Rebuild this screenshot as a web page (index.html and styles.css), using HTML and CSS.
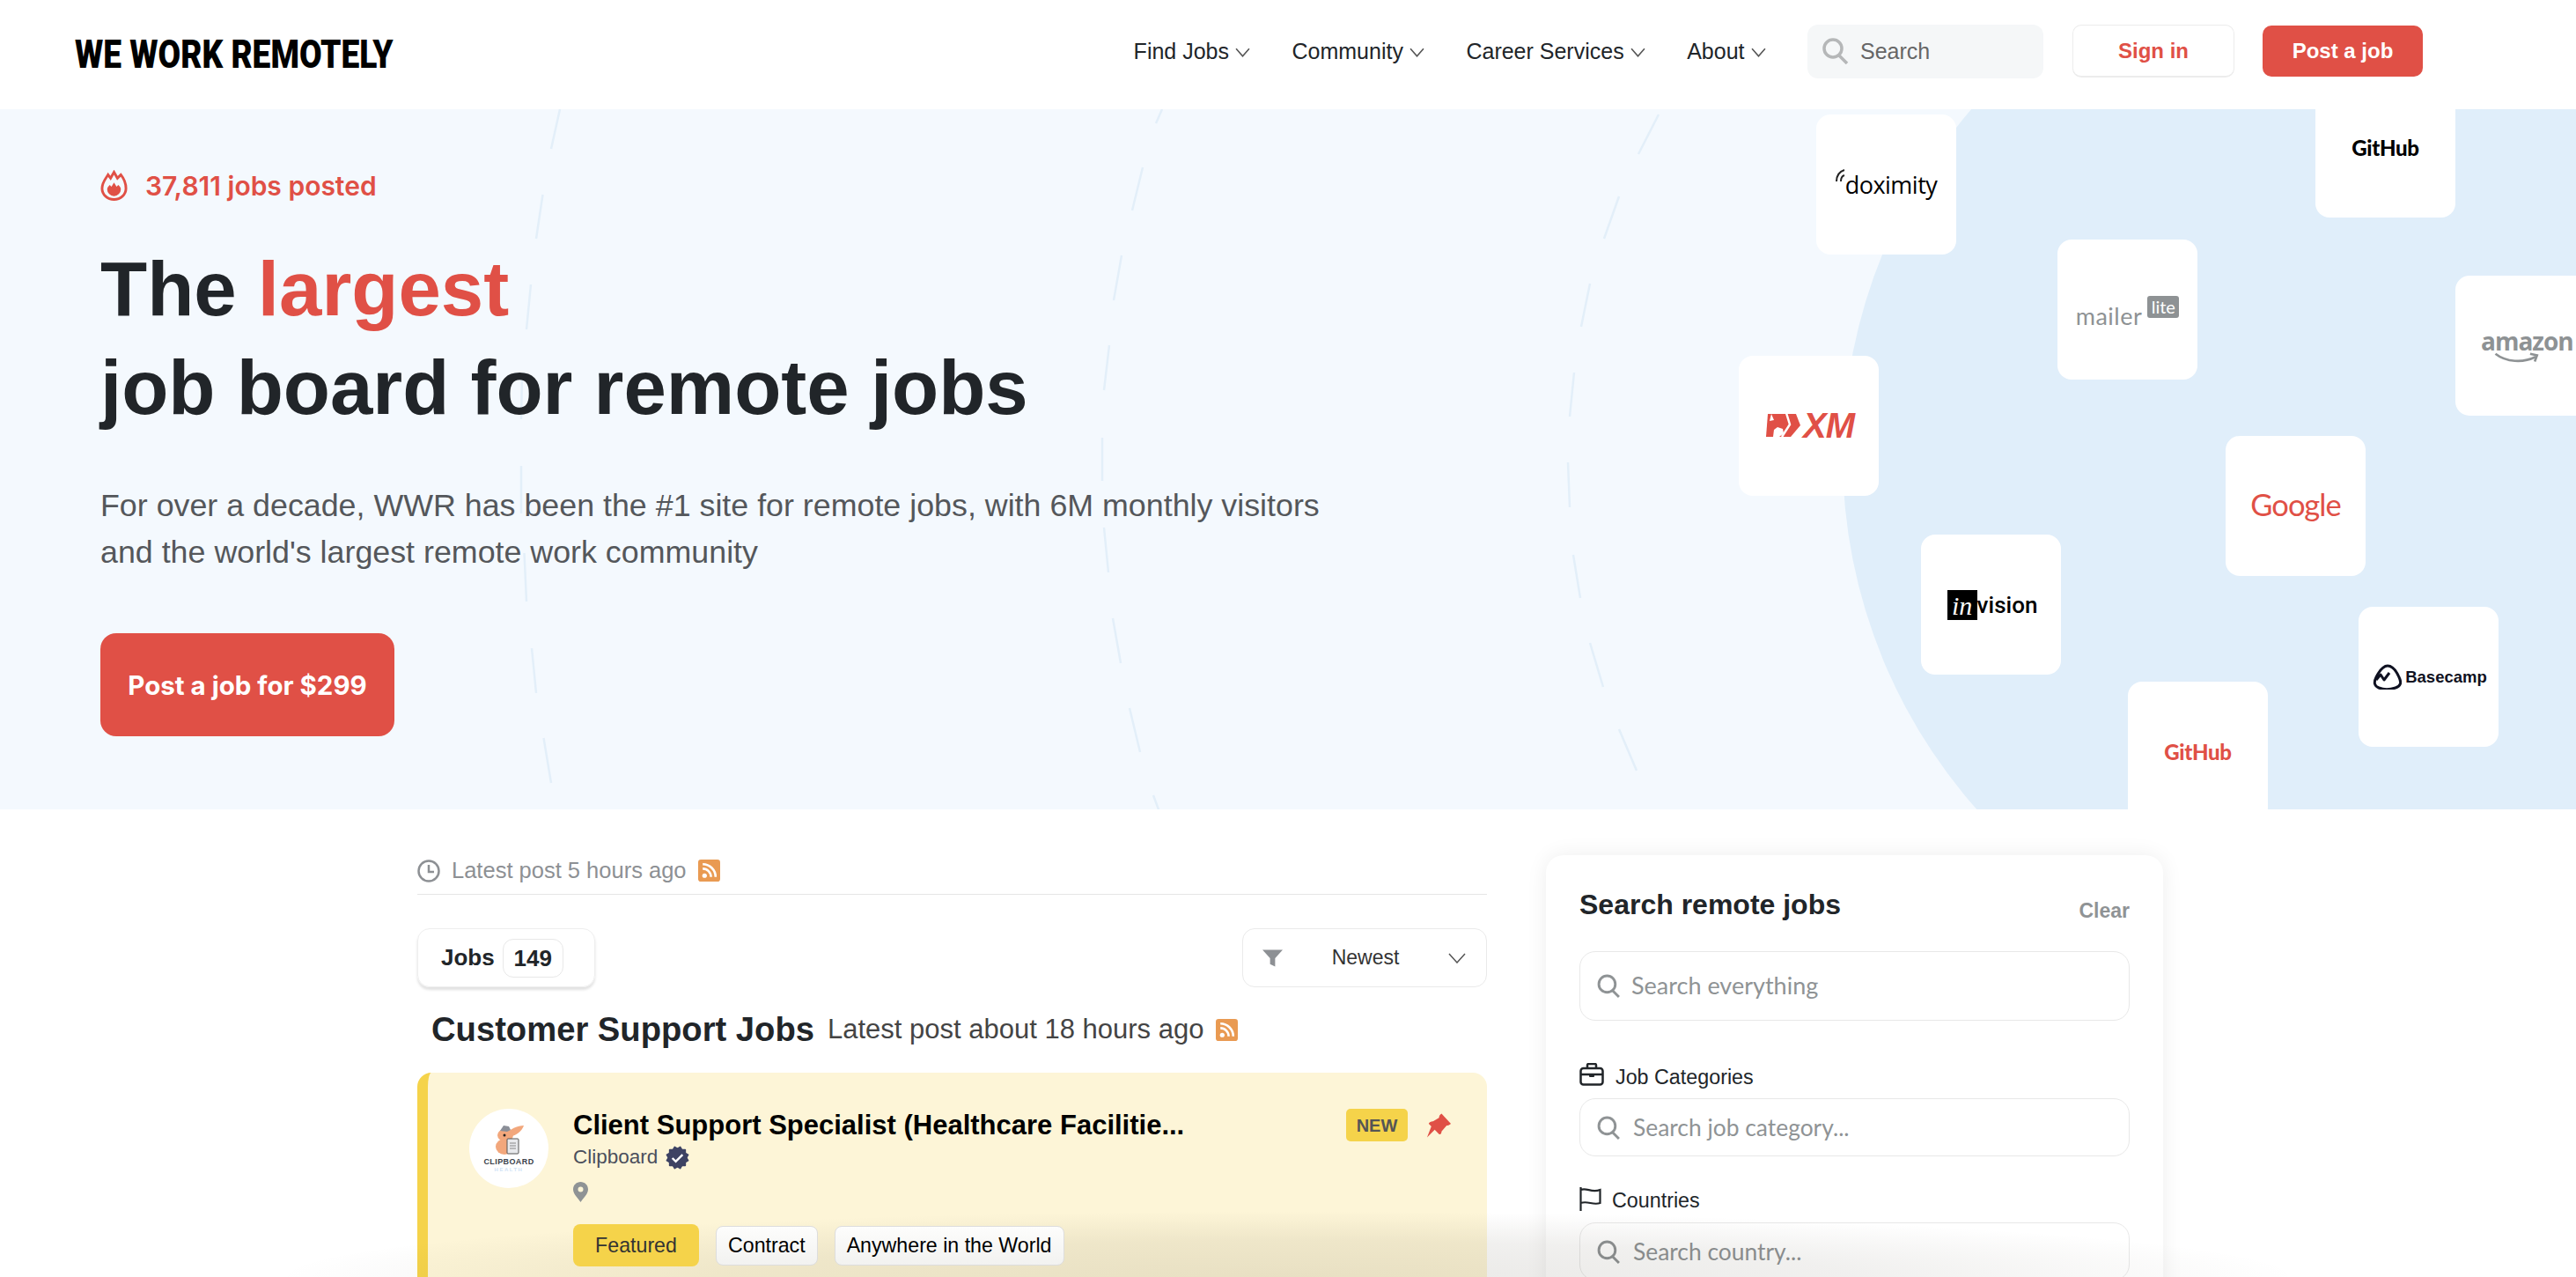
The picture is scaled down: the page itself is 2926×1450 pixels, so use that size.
FILE: index.html
```html
<!DOCTYPE html>
<html lang="en">
<head>
  <meta charset="UTF-8">
  <meta name="viewport" content="width=device-width, initial-scale=1.0">
  <title>We Work Remotely</title>
  <link rel="stylesheet" href="styles.css">
</head>
<body>
<div class="page">
  <!-- Top bar -->
  <header class="topbar">
    <a class="brand"><span class="brand-text">WE WORK REMOTELY</span></a>
    <nav class="nav">
      <a class="nav-link">Find Jobs <svg class="caret" viewBox="0 0 16 10"><path d="M1 1l7 8 7-8"/></svg></a>
      <a class="nav-link">Community <svg class="caret" viewBox="0 0 16 10"><path d="M1 1l7 8 7-8"/></svg></a>
      <a class="nav-link">Career Services <svg class="caret" viewBox="0 0 16 10"><path d="M1 1l7 8 7-8"/></svg></a>
      <a class="nav-link">About <svg class="caret" viewBox="0 0 16 10"><path d="M1 1l7 8 7-8"/></svg></a>
      <div class="nav-search">
        <svg class="nav-search-icon" viewBox="0 0 33 30"><circle cx="13" cy="12" r="10"/><path d="M20 20l9 9"/></svg>
        <span>Search</span>
      </div>
      <a class="btn-outline">Sign in</a>
      <a class="btn-red">Post a job</a>
    </nav>
  </header>

  <!-- Hero -->
  <section class="hero">
    <div class="hero-circle"></div>
    <svg class="hero-dashes" viewBox="0 0 2926 795">
      <path d="M636 0L626 45M616.500 97L609 147M603 199L598 250M593 301L592 352M592 405L592 459M595.500 504L598 559M604 612L609 663M617.500 714L626 765"/>
      <path d="M1320 0L1313 16M1298 66L1286 115M1274 166L1265 217M1260 268L1254 319M1252 373L1252 422M1254 475L1259 526M1264 578L1273 629M1283 680L1295 730M1310 779L1320 806"/>
      <path d="M1884 6L1861 51M1839 99L1822 147M1806 198L1796 247M1788 299L1783 349M1781 401L1783 452M1787 506L1795 555M1806 606L1821 656M1839 704L1859 751M1884 796"/>
    </svg>

    <div class="hero-copy">
      <div class="hero-count">
        <svg class="flame" viewBox="0 0 32 36">
          <path class="flame-line" d="M16 2l4 7 4-4c4 5 6 10 6 16a14 13 0 0 1-28 0c0-7 4-11 7-16l3 4z"/>
          <path class="flame-fill" d="M16 14l3 5 2-2c2 2 3 3 3 5a8 8 0 0 1-16 0c0-2 2-4 3-5l2 2z"/>
        </svg>
        <span>37,811 jobs posted</span>
      </div>
      <h1>The <em>largest</em><br>job board for remote jobs</h1>
      <p class="hero-lead">For over a decade, WWR has been the #1 site for remote jobs, with 6M monthly visitors<br>and the world's largest remote work community</p>
      <a class="hero-btn">Post a job for $299</a>
    </div>

    <!-- company tiles sit on a free canvas -->
    <div class="tile tile-doximity">
      <svg class="dox-waves" viewBox="0 0 14 24"><path d="M12 2C6 4 3 9 3 15M12 8C9 9 8 12 8 15"/></svg>
      <span>doximity</span>
    </div>
    <div class="tile tile-github-top"><span>GitHub</span></div>
    <div class="tile tile-mailer"><span>mailer</span><b>lite</b></div>
    <div class="tile tile-amazon">
      <span>amazon</span>
      <svg viewBox="0 0 60 16"><path d="M2 2c14 11 36 12 52 4"/><path d="M47 2l9 2-3 8"/></svg>
    </div>
    <div class="tile tile-xm">
      <svg viewBox="0 0 41 28">
        <path class="xm-base" d="M3 1h32l5 13-11 13H1z"/>
        <path class="xm-cut" d="M7 1l3 7-5 1zM9 27l1-8 4-3 6 2 1 5-5 4z"/>
        <path class="xm-line" d="M24 0l4 13-9 14"/>
      </svg>
      <span>XM</span>
    </div>
    <div class="tile tile-google"><span>Google</span></div>
    <div class="tile tile-invision"><i>in</i><span>vision</span></div>
    <div class="tile tile-basecamp">
      <svg viewBox="0 0 33 29"><path class="bc-shell" d="M17 2c6 0 10 6 13 13 3 6 2 10-4 12-6 2-14 2-19 0-5-2-6-6-3-12C7 9 11 2 17 2z"/><path class="bc-zig" d="M4 18l5-6 4 6 6-8"/></svg>
      <span>Basecamp</span>
    </div>
    <div class="tile tile-github-low"><span>GitHub</span></div>
  </section>

  <!-- Jobs and filters -->
  <main class="board">
    <div class="jobs-col">
      <div class="latest-row">
        <svg class="clock" viewBox="0 0 26 26"><circle cx="13" cy="13" r="11.500"/><path d="M13 6v8h6"/></svg>
        <span>Latest post 5 hours ago</span>
        <svg class="rss" viewBox="0 0 24 24"><rect width="24" height="24" rx="3"/><circle cx="7" cy="17.500" r="2.500"/><path d="M5 10a9 9 0 0 1 9 9M5 5a14 14 0 0 1 14 14"/></svg>
      </div>

      <div class="toolbar">
        <div class="jobs-tab"><span>Jobs</span><span class="jobs-count">149</span></div>
        <div class="sort-box">
          <svg class="funnel" viewBox="0 0 24 20"><path d="M0 0h24l-9 10v10l-6-3v-7z"/></svg>
          <span>Newest</span>
          <svg class="sort-caret" viewBox="0 0 20 12"><path d="M1 1l9 10 9-10"/></svg>
        </div>
      </div>

      <div class="category-head">
        <h2>Customer Support Jobs</h2>
        <span>Latest post about 18 hours ago</span>
        <svg class="rss" viewBox="0 0 24 24"><rect width="24" height="24" rx="3"/><circle cx="7" cy="17.500" r="2.500"/><path d="M5 10a9 9 0 0 1 9 9M5 5a14 14 0 0 1 14 14"/></svg>
      </div>

      <article class="job-card">
        <div class="job-logo">
          <svg viewBox="0 0 36 36">
            <path fill="#f2a77c" d="M16 10C20 6 28 2 35 2c-2 6-9 12-15 12z"/>
            <ellipse cx="14" cy="13" rx="9" ry="7" fill="#f2a77c"/>
            <ellipse cx="13" cy="26" rx="10" ry="9" fill="#f2a77c"/>
            <path fill="#8b8f98" d="M8 8l4-6 6 1 2 4-4 2z"/>
            <circle cx="13" cy="13" r="1.500" fill="#222"/>
            <rect x="16" y="17" width="13" height="17" rx="1" fill="#e8e9ec" stroke="#555"/>
            <path stroke="#888" d="M19 22h7M19 25h7M19 28h7"/>
          </svg>
          <span class="logo-name">CLIPBOARD</span>
          <span class="logo-sub">HEALTH</span>
        </div>
        <div class="job-body">
          <h3>Client Support Specialist (Healthcare Facilitie...</h3>
          <div class="company">
            <span>Clipboard</span>
            <svg class="verified" viewBox="0 0 30 30">
              <rect x="5" y="5" width="20" height="20" rx="1"/>
              <rect x="5" y="5" width="20" height="20" rx="1" transform="rotate(30 15 15)"/>
              <rect x="5" y="5" width="20" height="20" rx="1" transform="rotate(60 15 15)"/>
              <path d="M9 15.500l4 4 8-8"/>
            </svg>
          </div>
          <svg class="map-pin" viewBox="0 0 17 23"><path fill-rule="evenodd" d="M8.500 0C13 0 17 3.500 17 8.500 17 14 11 19 8.500 23 6 19 0 14 0 8.500 0 3.500 4 0 8.500 0zm0 5.500a3 3 0 1 0 0 6 3 3 0 0 0 0-6z"/></svg>
          <div class="tags">
            <span class="tag tag-featured">Featured</span>
            <span class="tag">Contract</span>
            <span class="tag">Anywhere in the World</span>
          </div>
        </div>
        <div class="job-flags">
          <span class="new-badge">NEW</span>
          <svg class="tack" viewBox="0 0 30 28"><path d="M18 0l11 12c-2 2-4 2-5 2l-6 7c0 2-1 4-3 3l-5-5-9 9 5-13-3-3c0-2 3-3 5-3l7-4c0-2 1-4 3-5z"/></svg>
        </div>
      </article>
    </div>

    <aside class="filters">
      <div class="filters-head">
        <h2>Search remote jobs</h2>
        <a>Clear</a>
      </div>
      <div class="field field-big">
        <svg class="field-icon" viewBox="0 0 26 26"><circle cx="11" cy="11" r="9"/><path d="M17 18l7 7"/></svg>
        <span>Search everything</span>
      </div>
      <div class="filter-label label-cat">
        <svg class="case-icon" viewBox="0 0 28 26"><rect x="1.500" y="6" width="25" height="18.500" rx="3"/><path d="M9 6V2.500A1.500 1.500 0 0 1 10.500 1h7A1.500 1.500 0 0 1 19 2.500V6M1.500 13h25"/><rect class="case-clasp" x="11" y="12" width="6" height="4" rx="1"/></svg>
        <span>Job Categories</span>
      </div>
      <div class="field">
        <svg class="field-icon" viewBox="0 0 26 26"><circle cx="11" cy="11" r="9"/><path d="M17 18l7 7"/></svg>
        <span>Search job category...</span>
      </div>
      <div class="filter-label label-country">
        <svg class="flag-icon" viewBox="0 0 25 27"><path d="M1.500 0v27M1.500 3c7-3 12 4 22 0v15c-8 3-14-3-22 0"/></svg>
        <span>Countries</span>
      </div>
      <div class="field">
        <svg class="field-icon" viewBox="0 0 26 26"><circle cx="11" cy="11" r="9"/><path d="M17 18l7 7"/></svg>
        <span>Search country...</span>
      </div>
    </aside>
  </main>

  <div class="bottom-fade"></div>
</div>
</body>
</html>
```

FILE: styles.css
```css
* {
  box-sizing: border-box;
}

html, body {
  margin: 0;
  padding: 0;
}

body {
  font-family: "Liberation Sans", Arial, sans-serif;
  color: #212529;
  background: #fff;
}

h1, h2, h3, p {
  margin: 0;
}

svg {
  display: block;
  flex: none;
}

.page {
  position: relative;
  height: 100vh;
  overflow: hidden;
}

/* Top bar */
.topbar {
  display: flex;
  align-items: center;
  justify-content: space-between;
  height: 124px;
  padding: 0 174px 8px 85px;
  background: #fff;
}

.brand-text {
  display: block;
  width: 450px;
  margin-top: 6px;
  font-family: Roboto, sans-serif;
  font-size: 45px;
  font-weight: 900;
  color: #000;
  white-space: nowrap;
  transform: scaleX(0.825);
  transform-origin: left center;
}

.nav {
  display: flex;
  align-items: center;
}

.nav-link {
  display: flex;
  align-items: center;
  gap: 7px;
  margin-right: 47.500px;
  font-size: 25px;
  color: #212529;
  white-space: nowrap;
}

.caret {
  width: 17px;
  height: 11px;
  margin-top: 3px;
}

.caret path,
.sort-caret path {
  fill: none;
  stroke: #555;
  stroke-width: 1.500;
}

.nav-search {
  display: flex;
  align-items: center;
  gap: 11px;
  width: 268px;
  height: 61px;
  padding-left: 16px;
  margin-right: 33px;
  font-size: 25px;
  color: #666;
  background: #f5f7f8;
  border-radius: 12px;
}

.nav-search-icon {
  width: 33px;
  height: 30px;
}

.nav-search-icon circle,
.nav-search-icon path {
  fill: none;
  stroke: #b5b7b8;
  stroke-width: 3.500;
}

.btn-outline,
.btn-red {
  display: flex;
  align-items: center;
  justify-content: center;
  height: 60px;
  font-size: 24px;
  font-weight: 700;
  border-radius: 10px;
}

.btn-outline {
  width: 184px;
  margin-right: 32px;
  color: #e05046;
  background: #fff;
  border: 1px solid #ececec;
  border-bottom-width: 2px;
}

.btn-red {
  width: 182px;
  height: 58px;
  color: #fff;
  background: #e05046;
}

/* Hero */
.hero {
  position: relative;
  height: 795px;
  overflow: hidden;
  background: #f4f9fe;
}

.hero-circle {
  position: absolute;
  left: 2093px;
  top: -210px;
  width: 1208px;
  height: 1208px;
  border-radius: 50%;
  background: #e0eefa;
}

.hero-dashes {
  position: absolute;
  left: 0;
  top: 0;
  width: 2926px;
  height: 795px;
}

.hero-dashes path {
  fill: none;
  stroke: #e3eff9;
  stroke-width: 2.500;
}

.hero-copy {
  position: relative;
  padding: 69px 0 0 114px;
}

.hero-count {
  display: flex;
  align-items: center;
  gap: 20px;
  height: 36px;
  font-family: Inter, sans-serif;
  font-size: 30px;
  font-weight: 600;
  color: #e05046;
}

.flame {
  width: 31px;
  height: 36px;
}

.flame-line {
  fill: none;
  stroke: #e05046;
  stroke-width: 3;
}

.flame-fill {
  fill: #e05046;
}

h1 {
  margin-top: 43px;
  font-size: 87px;
  line-height: 112px;
  font-weight: 700;
  color: #212529;
}

h1 em {
  font-style: normal;
  color: #e05046;
}

.hero-lead {
  margin-top: 52px;
  font-size: 35.800px;
  line-height: 53px;
  color: #54575b;
}

.hero-btn {
  display: flex;
  align-items: center;
  justify-content: center;
  width: 334px;
  height: 117px;
  margin-top: 65px;
  font-family: Inter, sans-serif;
  font-size: 29.500px;
  font-weight: 700;
  color: #fff;
  background: #e05046;
  border-radius: 18px;
}

/* Logo tiles */
.tile {
  position: absolute;
  display: flex;
  align-items: center;
  justify-content: center;
  width: 159px;
  height: 159px;
  background: #fff;
  border-radius: 16px;
}

.tile-doximity {
  left: 2063px;
  top: 6px;
  padding-left: 4px;
  font-family: "Open Sans", sans-serif;
  font-size: 27px;
  color: #000;
  letter-spacing: -0.5px;
}

.dox-waves {
  width: 14px;
  height: 24px;
  margin: -14px -1px 0 -6px;
}

.dox-waves path {
  fill: none;
  stroke: #222;
  stroke-width: 2;
}

.tile-github-top,
.tile-github-low {
  font-family: Lato, sans-serif;
  font-size: 24px;
  font-weight: 900;
  letter-spacing: -0.3px;
}

.tile-github-top {
  left: 2630px;
  top: -36px;
  color: #000;
}

.tile-mailer {
  left: 2337px;
  top: 148px;
  gap: 6px;
  font-family: Lato, sans-serif;
  font-size: 27px;
  color: #8e9294;
  letter-spacing: 0.5px;
}

.tile-mailer span {
  margin-top: 13px;
}

.tile-mailer b {
  display: block;
  position: relative;
  width: 36px;
  height: 25px;
  margin-top: -6px;
  font-size: 20px;
  font-weight: 400;
  line-height: 24px;
  text-align: center;
  letter-spacing: 0;
  color: #fff;
  background: #8e9294;
  border-radius: 3px;
}

.tile-amazon {
  left: 2789px;
  top: 189px;
  flex-direction: column;
  align-items: flex-start;
  padding-left: 29px;
  font-family: "Open Sans", sans-serif;
  font-size: 28px;
  font-weight: 700;
  line-height: 30px;
  color: #8e9294;
  letter-spacing: -1px;
}

.tile-amazon svg {
  width: 54px;
  height: 14px;
  margin: -2px 0 0 14px;
}

.tile-amazon svg path {
  fill: none;
  stroke: #8e9294;
  stroke-width: 3;
}

.tile-xm {
  left: 1975px;
  top: 280px;
  gap: 2px;
  padding-left: 2px;
  font-size: 40px;
  font-weight: 700;
  font-style: italic;
  color: #e05046;
  letter-spacing: -1px;
}

.tile-xm svg {
  width: 41px;
  height: 28px;
  margin-top: -2px;
}

.xm-base {
  fill: #e05046;
}

.xm-cut {
  fill: #fff;
}

.xm-line {
  fill: none;
  stroke: #fff;
  stroke-width: 2.500;
}

.tile-google {
  left: 2528px;
  top: 371px;
  padding-bottom: 5px;
  font-family: Lato, sans-serif;
  font-size: 34.500px;
  color: #e05046;
  letter-spacing: -1px;
}

.tile-invision {
  left: 2182px;
  top: 483px;
  padding-left: 3px;
  font-family: Roboto, sans-serif;
  font-size: 26px;
  font-weight: 500;
  color: #000;
}

.tile-invision i {
  display: block;
  width: 34px;
  height: 34px;
  font-family: "Liberation Serif", serif;
  font-size: 30px;
  line-height: 36px;
  text-align: center;
  color: #fff;
  background: #000;
}

.tile-basecamp {
  left: 2679px;
  top: 565px;
  gap: 4px;
  padding-left: 3px;
  font-size: 18.500px;
  font-weight: 700;
  color: #0f1121;
}

.tile-basecamp svg {
  width: 33px;
  height: 29px;
}

.bc-shell,
.bc-zig {
  fill: none;
  stroke: #0f1121;
  stroke-width: 3;
  stroke-linejoin: round;
}

.tile-github-low {
  left: 2417px;
  top: 650px;
  color: #e05046;
}

/* Board */
.board {
  display: grid;
  grid-template-columns: 1215px 701px;
  gap: 67px;
  padding-left: 474px;
}

.jobs-col {
  padding-top: 57px;
}

.latest-row {
  display: flex;
  align-items: center;
  height: 40px;
  padding-bottom: 14px;
  font-size: 25.500px;
  color: #8d9094;
  border-bottom: 1px solid #e6e6e6;
}

.clock {
  width: 26px;
  height: 26px;
  margin-right: 13px;
}

.clock circle,
.clock path {
  fill: none;
  stroke: #8d9094;
  stroke-width: 2.500;
}

.rss {
  width: 25px;
  height: 25px;
  margin-left: 13px;
}

.rss rect {
  fill: #e99a52;
}

.rss circle {
  fill: #fff;
}

.rss path {
  fill: none;
  stroke: #fff;
  stroke-width: 2.500;
}

.toolbar {
  display: flex;
  align-items: center;
  justify-content: space-between;
  margin-top: 38px;
}

.jobs-tab {
  display: flex;
  align-items: center;
  gap: 9px;
  width: 202px;
  height: 67px;
  padding-left: 26px;
  font-size: 26px;
  font-weight: 700;
  border: 1px solid #eee;
  border-radius: 14px;
  box-shadow: 0 3px 3px rgba(0, 0, 0, 0.12);
}

.jobs-count {
  width: 69px;
  height: 44px;
  line-height: 42px;
  text-align: center;
  border: 1px solid #e8e8e8;
  border-radius: 12px;
}

.sort-box {
  display: flex;
  align-items: center;
  justify-content: space-between;
  width: 278px;
  height: 67px;
  padding: 0 23px 0 22px;
  font-size: 23px;
  color: #333;
  border: 1px solid #eaeaea;
  border-radius: 14px;
}

.funnel {
  width: 23px;
  height: 20px;
  fill: #8d9094;
}

.sort-caret {
  width: 20px;
  height: 12px;
}

.category-head {
  display: flex;
  align-items: center;
  height: 50px;
  margin-top: 23px;
  padding-left: 16px;
}

.category-head h2 {
  font-size: 38.200px;
  font-weight: 700;
}

.category-head span {
  margin-left: 15px;
  font-size: 31px;
  color: #444;
}

.category-head .rss {
  margin-left: 14px;
}

.job-card {
  display: flex;
  height: 400px;
  margin-top: 24px;
  padding: 41px 40px 0 47px;
  background: #fdf5d7;
  border-left: 12px solid #f5d34a;
  border-radius: 16px;
}

.job-logo {
  display: flex;
  flex-direction: column;
  align-items: center;
  flex: none;
  width: 90px;
  height: 90px;
  padding-top: 17px;
  background: #fff;
  border-radius: 50%;
}

.job-logo svg {
  width: 36px;
  height: 36px;
}

.logo-name {
  margin-top: 2px;
  font-size: 9px;
  font-weight: 700;
  line-height: 11px;
  color: #3a3f4a;
  letter-spacing: 0.4px;
}

.logo-sub {
  font-size: 6px;
  font-weight: 700;
  line-height: 7px;
  color: #cfe3f6;
  letter-spacing: 1.500px;
}

.job-body {
  flex: 1;
  padding-left: 28px;
}

.job-body h3 {
  font-size: 31px;
  font-weight: 700;
  line-height: 38px;
  color: #000;
  white-space: nowrap;
}

.company {
  display: flex;
  align-items: center;
  gap: 8px;
  height: 30px;
  margin-top: 2px;
  font-size: 22.500px;
  color: #4b4f5c;
}

.verified {
  width: 29px;
  height: 29px;
}

.verified rect {
  fill: #3d4263;
}

.verified path {
  fill: none;
  stroke: #fff;
  stroke-width: 2.500;
}

.map-pin {
  width: 17px;
  height: 23px;
  margin-top: 13px;
  fill: #8f9395;
}

.tags {
  position: relative;
  z-index: 2;
  display: flex;
  align-items: center;
  gap: 19px;
  margin-top: 25px;
}

.tag {
  display: flex;
  align-items: center;
  height: 45px;
  padding: 0 13px;
  font-size: 23.200px;
  color: #000;
  white-space: nowrap;
  background: linear-gradient(#fdfdfc, #f2f2f0);
  border: 1px solid #ddd;
  border-radius: 8px;
}

.tag-featured {
  width: 143px;
  height: 48px;
  justify-content: center;
  color: #333;
  background: #f5d34a;
  border: none;
}

.job-flags {
  display: flex;
  align-items: flex-start;
  gap: 21px;
  flex: none;
}

.new-badge {
  width: 70px;
  height: 37px;
  font-size: 20px;
  font-weight: 700;
  line-height: 38px;
  text-align: center;
  color: #555;
  background: #f5d34a;
  border-radius: 5px;
}

.tack {
  width: 29px;
  height: 28px;
  margin-top: 5px;
  fill: #e05046;
}

/* Filter card */
.filters {
  height: 600px;
  margin-top: 52px;
  padding: 36px 38px 0;
  background: #fff;
  border-radius: 20px;
  box-shadow: 0 0 24px rgba(0, 0, 0, 0.07);
}

.filters-head {
  display: flex;
  align-items: baseline;
  justify-content: space-between;
  height: 40px;
  line-height: 40px;
}

.filters-head h2 {
  font-size: 32px;
  font-weight: 700;
}

.filters-head a {
  position: relative;
  top: 4px;
  font-size: 23px;
  font-weight: 700;
  color: #8f9395;
}

.field {
  display: flex;
  align-items: center;
  gap: 14px;
  height: 66px;
  padding-left: 19px;
  font-family: Lato, sans-serif;
  font-size: 26.400px;
  color: #8f9395;
  border: 1px solid #e8e8e8;
  border-radius: 18px;
}

.field-big {
  height: 79px;
  margin-top: 33px;
  gap: 12px;
  font-size: 27px;
}

.field-big span {
  margin-top: -2px;
}

.field-icon {
  width: 27px;
  height: 27px;
}

.field-icon circle,
.field-icon path {
  fill: none;
  stroke: #8f9395;
  stroke-width: 2.800;
}

.filter-label {
  display: flex;
  align-items: center;
  font-size: 23.300px;
  color: #212529;
}

.label-cat {
  gap: 13px;
  height: 26px;
  margin: 48px 0 14px;
}

.label-cat span {
  margin-top: 6px;
}

.label-country {
  gap: 12px;
  height: 27px;
  margin: 35px 0 13px;
}

.label-country span {
  margin-top: 4px;
}

.case-icon {
  width: 28px;
  height: 26px;
}

.case-icon rect,
.case-icon path {
  fill: none;
  stroke: #212529;
  stroke-width: 2.500;
}

.case-icon .case-clasp {
  fill: #212529;
  stroke: none;
}

.flag-icon {
  width: 25px;
  height: 27px;
}

.flag-icon path {
  fill: none;
  stroke: #212529;
  stroke-width: 2.200;
}

/* soft shadow rising from the bottom of the window */
.bottom-fade {
  position: absolute;
  left: 0;
  right: 0;
  bottom: 0;
  height: 75px;
  background: radial-gradient(ellipse 1150px 75px at 50% 100%, rgba(50, 40, 20, 0.1), rgba(50, 40, 20, 0.07) 55%, rgba(50, 40, 20, 0) 100%);
  pointer-events: none;
}
```
